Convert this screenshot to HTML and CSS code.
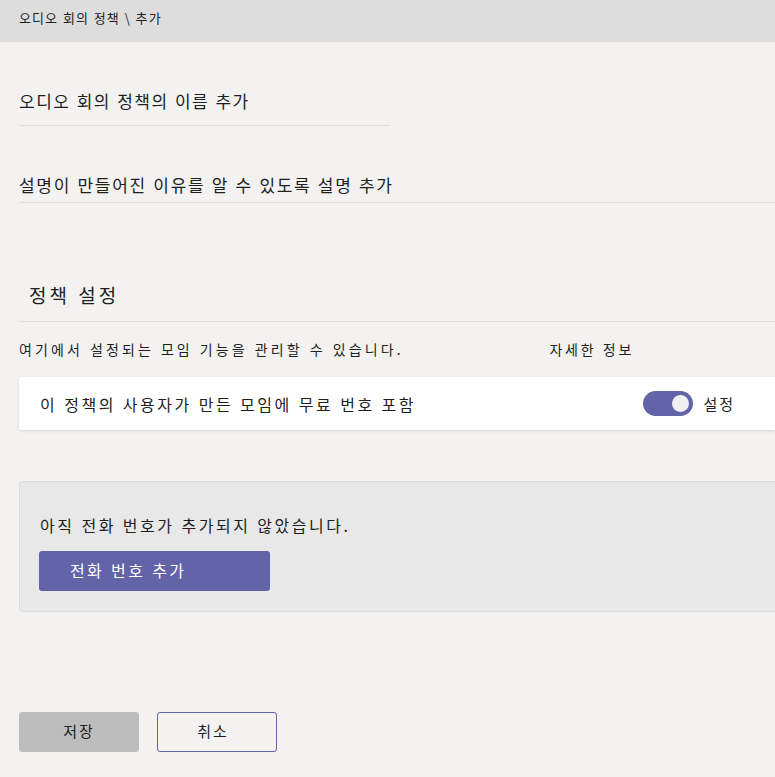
FILE: index.html
```html
<!DOCTYPE html>
<html lang="ko">
<head>
<meta charset="utf-8">
<link rel="stylesheet" href="styles.css">
</head>
<body>
<header class="topbar">오디오 회의 정책 \ 추가</header>
<main class="content">
  <div class="field field-short">오디오 회의 정책의 이름 추가</div>
  <div class="field field-long">설명이 만들어진 이유를 알 수 있도록 설명 추가</div>
  <h2 class="section-title">정책 설정</h2>
  <div class="desc-row">
    <span>여기에서 설정되는 모임 기능을 관리할 수 있습니다.</span>
    <span class="more">자세한 정보</span>
  </div>
  <div class="card">
    <span>이 정책의 사용자가 만든 모임에 무료 번호 포함</span>
    <div class="toggle-wrap">
      <span class="toggle"><span class="knob"></span></span>
      <span>설정</span>
    </div>
  </div>
  <div class="numbers">
    <p class="numbers-text">아직 전화 번호가 추가되지 않았습니다.</p>
    <button class="btn-primary">전화 번호 추가</button>
  </div>
  <div class="actions">
    <button class="btn-save">저장</button>
    <button class="btn-cancel">취소</button>
  </div>
</main>
</body>
</html>
```
FILE: styles.css
```css
* { box-sizing: border-box; }
html, body { margin: 0; padding: 0; }
body {
  background: #f3f2f1;
  color: #201f1e;
  font-family: "Noto Sans CJK KR", "Noto Sans", sans-serif;
  width: 775px;
  height: 777px;
  overflow: hidden;
}
.topbar {
  height: 42px;
  background: #dddddd;
  padding: 9px 0 0 19px;
  font-size: 13px;
  line-height: 18px;
  letter-spacing: 1.1px;
}
.content {
  padding-left: 19px;
}
.field {
  font-size: 17px;
  line-height: 24px;
  border-bottom: 1px solid #e1dfdd;
}
.field-short {
  width: 371px;
  margin-top: 47px;
  padding-bottom: 12px;
  letter-spacing: 1.5px;
}
.field-long {
  margin-top: 47px;
  padding-bottom: 5px;
  letter-spacing: 1.7px;
}
.section-title {
  margin: 79px 0 0 0;
  padding: 0 0 13px 10px;
  font-size: 19px;
  line-height: 26px;
  font-weight: 400;
  letter-spacing: 3px;
  border-bottom: 1px solid #e1dfdd;
}
.desc-row {
  display: flex;
  font-size: 14px;
  line-height: 20px;
  margin-top: 17px;
  letter-spacing: 3.1px;
}
.desc-row .more {
  margin-left: auto;
  margin-right: 141px;
  letter-spacing: 2.7px;
}
.card {
  margin-top: 18px;
  height: 53px;
  background: #ffffff;
  box-shadow: 0 1px 3px rgba(0,0,0,0.13);
  border-radius: 2px 0 0 2px;
  display: flex;
  align-items: center;
  padding-left: 21px;
  font-size: 16px;
  letter-spacing: 2.5px;
}
.toggle-wrap {
  margin-left: auto;
  margin-right: 40px;
  display: flex;
  align-items: center;
  gap: 10px;
  font-size: 15px;
  letter-spacing: 2px;
}
.toggle {
  width: 50px;
  height: 25px;
  border-radius: 13px;
  background: #6264a7;
  display: flex;
  align-items: center;
  justify-content: flex-end;
  padding-right: 4px;
}
.knob {
  width: 17px;
  height: 17px;
  border-radius: 50%;
  background: #f0f0f0;
}
.numbers {
  margin-top: 51px;
  height: 131px;
  background: #e8e8e8;
  border: 1px solid #dcdcdc;
  border-right: none;
  border-radius: 4px 0 0 4px;
  padding: 31px 0 0 19px;
}
.numbers-text {
  margin: 0 0 0 1px;
  font-size: 16px;
  line-height: 24px;
  letter-spacing: 2.5px;
}
.btn-primary {
  margin-top: 14px;
  width: 231px;
  height: 40px;
  background: #6264a7;
  color: #ffffff;
  border: none;
  border-radius: 3px;
  font-family: inherit;
  font-size: 16px;
  letter-spacing: 2.4px;
  text-align: left;
  padding: 0 0 2px 31px;
}
.actions {
  margin-top: 100px;
  display: flex;
  gap: 18px;
}
.actions button {
  width: 120px;
  height: 40px;
  border-radius: 3px;
  font-family: inherit;
  font-size: 15px;
  letter-spacing: 2px;
  color: #201f1e;
  padding: 0 0 4px 0;
}
.btn-save {
  background: #bdbdbd;
  border: none;
}
.btn-cancel {
  background: #f3f2f1;
  border: 1px solid #6264a7;
  padding-right: 8px !important;
}
```
